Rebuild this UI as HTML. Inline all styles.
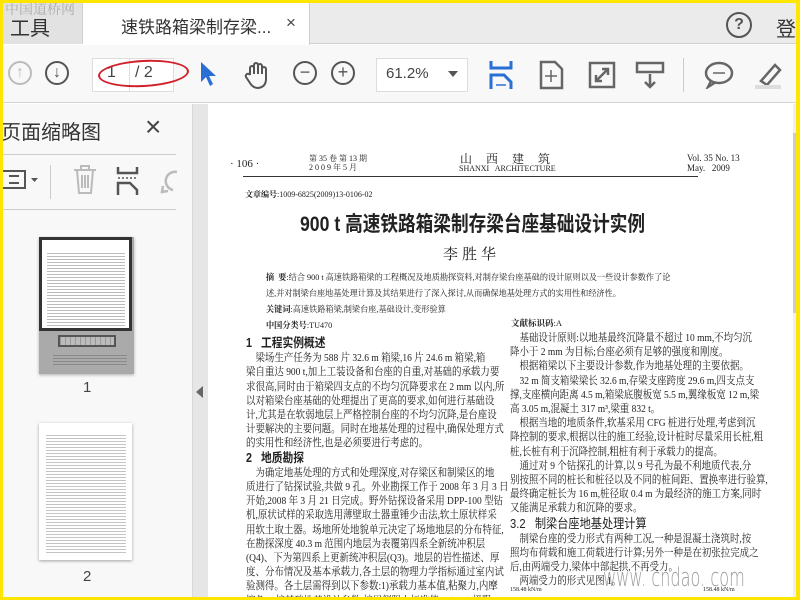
<!DOCTYPE html>
<html><head><meta charset="utf-8"><style>
*{margin:0;padding:0;box-sizing:border-box}
html,body{width:800px;height:600px;overflow:hidden}
body{background:#ffe600;position:relative;font-family:"Liberation Sans","Noto Sans CJK SC",sans-serif}
.a{position:absolute}
.s{font-family:"Liberation Serif","Noto Serif CJK SC",serif;color:#222;white-space:nowrap;position:absolute}
.t{font-size:11px;transform:scaleX(.86);transform-origin:left top;line-height:14.2px}
.h{font-family:"Liberation Sans","Noto Sans CJK SC",sans-serif;font-weight:bold;font-size:12.5px;display:inline-block;line-height:15px}
</style></head><body>
<div class="a" style="left:3px;top:3px;width:793px;height:594px;background:#fff;overflow:hidden">
<!-- tab bar -->
<div class="a" style="left:0;top:0;width:793px;height:41px;background:#ebebeb;border-bottom:1px solid #d0d0d0"></div>
<div class="a" style="left:0;top:0;width:80px;height:41px;background:#e2e2e2;border-right:1px solid #d0d0d0"></div>
<div class="a" style="left:7px;top:9px;font-size:20px;color:#333">工具</div>
<div class="a" style="left:2px;top:-4px;font-size:14px;color:rgba(150,150,150,.7);font-family:'Noto Serif CJK SC',serif">中国道桥网</div>
<div class="a" style="left:80px;top:0;width:227px;height:42px;background:#fff;border-right:1px solid #d0d0d0"></div>
<div class="a" style="left:118px;top:10px;font-size:17px;color:#333">速铁路箱梁制存梁...</div>
<div class="a" style="left:283px;top:10px;font-size:17px;color:#444">×</div>
<div class="a" style="left:723px;top:9px;width:26px;height:26px;border:2px solid #555;border-radius:50%;text-align:center;font-size:16px;font-weight:bold;color:#555;line-height:22px">?</div>
<div class="a" style="left:773px;top:10px;font-size:20px;color:#333">登</div>
<!-- toolbar -->
<div class="a" style="left:0;top:42px;width:793px;height:58px;background:#f8f8f8;border-bottom:1px solid #d4d4d4"></div>
<div class="a" style="left:5px;top:58px;width:24px;height:24px;border:2px solid #bbb;border-radius:50%;color:#bbb;text-align:center;font-size:16px;line-height:19px;font-weight:bold">↑</div>
<div class="a" style="left:42px;top:58px;width:24px;height:24px;border:2px solid #555;border-radius:50%;color:#555;text-align:center;font-size:16px;line-height:19px;font-weight:bold">↓</div>
<div class="a" style="left:89px;top:55px;width:82px;height:34px;background:#fff;border:1px solid #ddd"></div>
<div class="a" style="left:126px;top:55px;width:1px;height:34px;background:#ddd"></div>
<div class="a" style="left:104px;top:61px;font-size:16px;color:#444">1</div>
<div class="a" style="left:132px;top:61px;font-size:16px;color:#444">/ 2</div>
<div class="a" style="left:95px;top:57px;width:91px;height:27px;border:2.5px solid #d0202a;border-radius:50%;transform:rotate(-3deg)"></div>
<svg class="a" style="left:196px;top:57px" width="20" height="28"><path d="M2 2 L2 22 L7 17 L11 26 L14 24 L10 16 L17 16 Z" fill="#2a6fd6"/></svg>
<svg class="a" style="left:240px;top:57px" width="30" height="30" fill="none" stroke="#555" stroke-width="2"><path d="M7 15 V8 a2 2 0 0 1 4 0 V14 V5 a2 2 0 0 1 4 0 V14 V6 a2 2 0 0 1 4 0 V14 V9 a2 2 0 0 1 4 0 V19 q0 8 -8 9 q-5 0 -8 -5 L3 17 a2 2 0 0 1 4 -2"/></svg>
<div class="a" style="left:290px;top:58px;width:24px;height:24px;border:2px solid #555;border-radius:50%;color:#555;text-align:center;font-size:18px;line-height:19px">−</div>
<div class="a" style="left:328px;top:58px;width:24px;height:24px;border:2px solid #555;border-radius:50%;color:#555;text-align:center;font-size:18px;line-height:19px">+</div>
<div class="a" style="left:373px;top:55px;width:92px;height:34px;background:#fff;border:1px solid #ddd"></div>
<div class="a" style="left:383px;top:62px;font-size:15px;color:#444">61.2%</div>
<div class="a" style="left:445px;top:68px;border-left:5px solid transparent;border-right:5px solid transparent;border-top:6px solid #555"></div>
<svg class="a" style="left:485px;top:57px" width="26" height="30" fill="none" stroke="#2a6fd6" stroke-width="3"><path d="M3 1 V8 H23 V1"/><path d="M3 29 V15 H16 L23 22 V29"/><path d="M8 25 H18" stroke-width="1.5"/></svg>
<svg class="a" style="left:535px;top:57px" width="26" height="30" fill="none" stroke="#666" stroke-width="2.5"><path d="M3 2 H17 L24 9 V28 H3 Z"/><path d="M13 10 V22 M7 16 H19" stroke-width="1.5"/></svg>
<svg class="a" style="left:585px;top:58px" width="28" height="28" fill="none" stroke="#666" stroke-width="2.5"><rect x="2" y="2" width="24" height="24"/><path d="M8 20 L20 8 M14 8 H20 V14 M8 14 V20 H14" stroke-width="2.5"/></svg>
<svg class="a" style="left:632px;top:58px" width="30" height="28" fill="none" stroke="#666" stroke-width="2.5"><rect x="2" y="2" width="26" height="9"/><path d="M15 13 V26 M10 21 L15 26 L20 21"/></svg>
<div class="a" style="left:680px;top:55px;width:1px;height:34px;background:#ccc"></div>
<svg class="a" style="left:700px;top:58px" width="32" height="28" fill="none" stroke="#666" stroke-width="2.5"><ellipse cx="16" cy="12" rx="13" ry="10"/><path d="M8 20 L5 26 L13 21"/><path d="M10 12 H22" stroke-width="1.5"/></svg>
<svg class="a" style="left:748px;top:58px" width="32" height="28"><path d="M10 20 L24 4 L29 9 L16 24 Z" fill="none" stroke="#666" stroke-width="2.5"/><path d="M4 26 H30" stroke="#ddd" stroke-width="4"/></svg>
<!-- sidebar -->
<div class="a" style="left:0;top:101px;width:189px;height:493px;background:#f8f8f8"></div>
<div class="a" style="left:-2px;top:113px;font-size:20px;color:#333">页面缩略图</div>
<div class="a" style="left:142px;top:108px;font-size:28px;color:#444;font-weight:200">×</div>
<div class="a" style="left:0;top:151px;width:173px;height:1px;background:#ccc"></div>
<div class="a" style="left:0;top:206px;width:173px;height:1px;background:#ccc"></div>
<div class="a" style="left:47px;top:162px;width:1px;height:34px;background:#ccc"></div>
<svg class="a" style="left:0;top:163px" width="40" height="28" fill="none" stroke="#555" stroke-width="2"><rect x="-4" y="5" width="26" height="17"/><path d="M6 10 H16 M6 17 H16" /><path d="M28 12 H35 L31.5 16 Z" fill="#555" stroke="none"/></svg>
<svg class="a" style="left:68px;top:161px" width="28" height="32" fill="none" stroke="#bbb" stroke-width="2"><path d="M3 6 H25 M10 6 V2 H18 V6 M6 6 L8 29 H20 L22 6 M11 11 V24 M14 11 V24 M17 11 V24"/></svg>
<svg class="a" style="left:112px;top:162px" width="26" height="32" fill="none" stroke="#555" stroke-width="2.5"><path d="M3 2 V8 H22 V2"/><path d="M3 30 V18 H15 L22 25 V30"/><path d="M3 13 H22" stroke-dasharray="2 2" stroke-width="1.5"/></svg>
<svg class="a" style="left:156px;top:163px" width="20" height="30" fill="none" stroke="#bbb" stroke-width="2.5"><path d="M18 6 A9 9 0 1 0 14 24"/><path d="M4 20 L3 26 L9 25"/></svg>
<!-- thumbnails -->
<div class="a" style="left:36px;top:234px;width:95px;height:137px;background:#aaa;box-shadow:0 1px 3px rgba(0,0,0,.3)"></div>
<div class="a" style="left:36px;top:234px;width:93px;height:94px;background:#fff;border:3px solid #333"></div>
<div class="a" style="left:44px;top:248px;width:78px;height:75px;background:repeating-linear-gradient(#fff 0 2px,#bbb 2px 3px)"></div>
<div class="a" style="left:55px;top:332px;width:58px;height:12px;border:2px solid #555;background:repeating-linear-gradient(90deg,#999 0 1px,#bbb 1px 5px)"></div>
<div class="a" style="left:50px;top:350px;width:74px;height:14px;background:repeating-linear-gradient(#aaa 0 2px,#888 2px 3px)"></div>
<div class="a" style="left:80px;top:376px;font-size:15px;color:#444">1</div>
<div class="a" style="left:36px;top:420px;width:93px;height:137px;background:#fff;box-shadow:0 1px 3px rgba(0,0,0,.35)"></div>
<div class="a" style="left:43px;top:430px;width:80px;height:120px;background:repeating-linear-gradient(#fff 0 2px,#c4c4c4 2px 3px)"></div>
<div class="a" style="left:80px;top:565px;font-size:15px;color:#444">2</div>
<div class="a" style="left:189px;top:101px;width:16px;height:493px;background:#e6e6e6;border-left:1px solid #d8d8d8"></div>
<div class="a" style="left:193px;top:383px;border-top:6px solid transparent;border-bottom:6px solid transparent;border-right:7px solid #666"></div>
<!-- page -->
<div class="a" style="left:205px;top:101px;width:585px;height:493px;background:#fff"></div>
<div class="a" style="left:790px;top:101px;width:3px;height:493px;background:#f0f0f0"></div>
<div class="a" style="left:790px;top:130px;width:3px;height:180px;background:#ccc"></div>
<div class="s" style="left:227px;top:155px;font-size:11px">· 106 ·</div>
<div class="s" style="left:306px;top:151px;font-size:8px;line-height:9px">第 35 卷 第 13 期<br>2 0 0 9 年 5 月</div>
<div class="s" style="left:457px;top:147px;font-size:12px;letter-spacing:14px">山西建筑</div>
<div class="s" style="left:456px;top:161px;font-size:8px">SHANXI&nbsp;&nbsp; ARCHITECTURE</div>
<div class="s" style="left:684px;top:150px;font-size:9px;line-height:10px">Vol. 35 No. 13<br>May.&nbsp;&nbsp; 2009</div>
<div class="a" style="left:240px;top:173px;width:455px;height:1px;background:#333"></div>
<div class="s" style="left:242px;top:186px;font-size:8px"><b>文章编号</b>:1009-6825(2009)13-0106-02</div>
<div class="s" style="left:297px;top:205px;font-size:21px;color:#222;font-weight:bold;font-family:'Liberation Sans','Noto Sans CJK SC',sans-serif;transform:scaleX(.84);transform-origin:left top">900 t 高速铁路箱梁制存梁台座基础设计实例</div>
<div class="s" style="left:440px;top:240px;font-size:15px;letter-spacing:4px">李胜华</div>
<div class="s" style="left:263px;top:266px;font-size:8.5px;line-height:16px;transform:scaleX(.96);transform-origin:left top"><b>摘&nbsp;&nbsp;要</b>:结合 900 t 高速铁路箱梁的工程概况及地质勘探资料,对制存梁台座基础的设计原则以及一些设计参数作了论<br>述,并对制梁台座地基处理计算及其结果进行了深入探讨,从而确保地基处理方式的实用性和经济性。<br><b>关键词</b>:高速铁路箱梁,制梁台座,基础设计,变形验算<br><b>中国分类号</b>:TU470</div>
<div class="s" style="left:508px;top:314px;font-size:8.5px"><b>文献标识码</b>:A</div>
<div class="s t" style="left:243px;top:333px">
<span class="h">1&nbsp;&nbsp; 工程实例概述</span><br>
&nbsp;&nbsp;&nbsp;&nbsp;梁场生产任务为 588 片 32.6 m 箱梁,16 片 24.6 m 箱梁,箱<br>
梁自重达 900 t,加上工装设备和台座的自重,对基础的承载力要<br>
求很高,同时由于箱梁四支点的不均匀沉降要求在 2 mm 以内,所<br>
以对箱梁台座基础的处理提出了更高的要求,如何进行基础设<br>
计,尤其是在软弱地层上严格控制台座的不均匀沉降,是台座设<br>
计要解决的主要问题。同时在地基处理的过程中,确保处理方式<br>
的实用性和经济性,也是必须要进行考虑的。<br>
<span class="h">2&nbsp;&nbsp; 地质勘探</span><br>
&nbsp;&nbsp;&nbsp;&nbsp;为确定地基处理的方式和处理深度,对存梁区和制梁区的地<br>
质进行了钻探试验,共做 9 孔。外业勘探工作于 2008 年 3 月 3 日<br>
开始,2008 年 3 月 21 日完成。野外钻探设备采用 DPP-100 型钻<br>
机,原状试样的采取选用薄壁取土器重锤少击法,软土原状样采<br>
用软土取土器。场地所处地貌单元决定了场地地层的分布特征,<br>
在勘探深度 40.3 m 范围内地层为表覆第四系全新统冲积层<br>
(Q4)、下为第四系上更新统冲积层(Q3)。地层的岩性描述、厚<br>
度、分布情况及基本承载力,各土层的物理力学指标通过室内试<br>
验测得。各土层需得到以下参数:1)承载力基本值,粘聚力,内摩<br>
擦角;2)桩基础地基设计参数:桩周侧阻力标准值 qs(kPa),极限</div>
<div class="s t" style="left:507px;top:328px">
&nbsp;&nbsp;&nbsp;&nbsp;基础设计原则:以地基最终沉降量不超过 10 mm,不均匀沉<br>
降小于 2 mm 为目标;台座必须有足够的强度和刚度。<br>
&nbsp;&nbsp;&nbsp;&nbsp;根据箱梁以下主要设计参数,作为地基处理的主要依据。<br>
&nbsp;&nbsp;&nbsp;&nbsp;32 m 简支箱梁梁长 32.6 m,存梁支座跨度 29.6 m,四支点支<br>
撑,支座横向距离 4.5 m,箱梁底腹板宽 5.5 m,翼缘板宽 12 m,梁<br>
高 3.05 m,混凝土 317 m³,梁重 832 t。<br>
&nbsp;&nbsp;&nbsp;&nbsp;根据当地的地质条件,软基采用 CFG 桩进行处理,考虑到沉<br>
降控制的要求,根据以往的施工经验,设计桩时尽量采用长桩,粗<br>
桩,长桩有利于沉降控制,粗桩有利于承载力的提高。<br>
&nbsp;&nbsp;&nbsp;&nbsp;通过对 9 个钻探孔的计算,以 9 号孔为最不利地质代表,分<br>
别按照不同的桩长和桩径以及不同的桩间距、置换率进行验算,<br>
最终确定桩长为 16 m,桩径取 0.4 m 为最经济的施工方案,同时<br>
又能满足承载力和沉降的要求。<br>
<span class="h" style="font-weight:normal;font-size:13px">3.2&nbsp;&nbsp; 制梁台座地基处理计算</span><br>
&nbsp;&nbsp;&nbsp;&nbsp;制梁台座的受力形式有两种工况,一种是混凝土浇筑时,按<br>
照均布荷载和施工荷载进行计算;另外一种是在初张拉完成之<br>
后,由两端受力,梁体中部起拱,不再受力。<br>
&nbsp;&nbsp;&nbsp;&nbsp;两端受力的形式见图 1。</div>
<div class="s" style="left:507px;top:584px;font-size:6px">158.48 kN/m</div>
<div class="s" style="left:700px;top:584px;font-size:6px">158.48 kN/m</div>
<div class="a" style="left:600px;top:560px;font-size:26px;color:rgba(120,120,120,.75);font-family:'DejaVu Sans','Liberation Sans',sans-serif;transform:scaleX(.62);transform-origin:left top;font-weight:200;white-space:nowrap">www. cndao. com</div>
</div>
</body></html>
